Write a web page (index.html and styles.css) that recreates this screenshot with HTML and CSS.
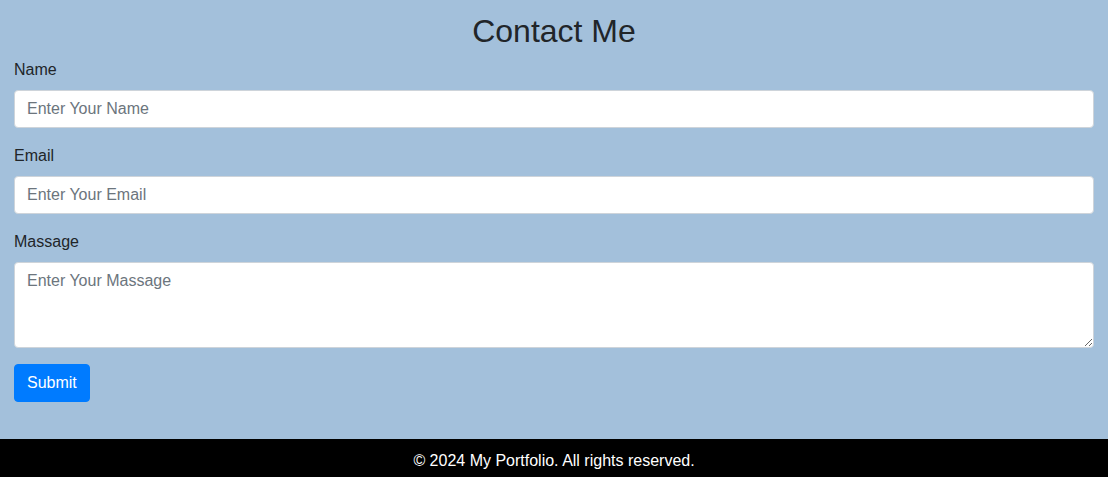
FILE: index.html
```html
<!DOCTYPE html>
<html lang="en">
<head>
<meta charset="utf-8">
<title>Contact Me</title>
<link rel="stylesheet" href="styles.css">
</head>
<body>
<section class="contact">
  <h2 class="contact-title">Contact Me</h2>
  <form class="contact-form">
    <div class="form-group">
      <label class="form-label" for="name">Name</label>
      <input class="form-control" id="name" type="text" placeholder="Enter Your Name">
    </div>
    <div class="form-group">
      <label class="form-label" for="email">Email</label>
      <input class="form-control" id="email" type="email" placeholder="Enter Your Email">
    </div>
    <div class="form-group">
      <label class="form-label" for="msg">Massage</label>
      <textarea class="form-control textarea" id="msg" rows="3" placeholder="Enter Your Massage"></textarea>
    </div>
    <button class="btn-submit" type="submit">Submit</button>
  </form>
</section>
<footer class="site-footer">© 2024 My Portfolio. All rights reserved.</footer>
</body>
</html>
```
FILE: styles.css
```css
* { box-sizing: border-box; }
html, body {
  margin: 0;
  padding: 0;
}
body {
  font-family: "Liberation Sans", Arial, sans-serif;
  font-size: 16px;
  line-height: 1.5;
  color: #212529;
  background: #a3c0db;
}
.contact {
  padding: 12px 14px 37px;
}
.contact-title {
  margin: 0 0 8px;
  font-size: 32px;
  font-weight: 400;
  line-height: 1.2;
  text-align: center;
}
.contact-form { margin: 0; }
.form-group {
  margin-bottom: 16px;
  display: flex;
  flex-direction: column;
}
.form-label {
  display: block;
  margin-bottom: 8px;
}
.form-control {
  display: block;
  width: 100%;
  height: 38px;
  padding: 6px 12px;
  font-family: inherit;
  font-size: 16px;
  line-height: 1.5;
  color: #495057;
  background: #fff;
  border: 1px solid #ced4da;
  border-radius: 4px;
  margin: 0;
}
.form-control::placeholder {
  color: #6c757d;
  opacity: 1;
}
.textarea {
  height: 86px;
  resize: vertical;
  overflow: auto;
}
.btn-submit {
  display: inline-block;
  padding: 6px 12px;
  font-family: inherit;
  font-size: 16px;
  line-height: 1.5;
  color: #fff;
  background: #007bff;
  border: 1px solid #007bff;
  border-radius: 4px;
  cursor: pointer;
}
.site-footer {
  background: #000;
  color: #fff;
  text-align: center;
  padding: 10px;
}
```
